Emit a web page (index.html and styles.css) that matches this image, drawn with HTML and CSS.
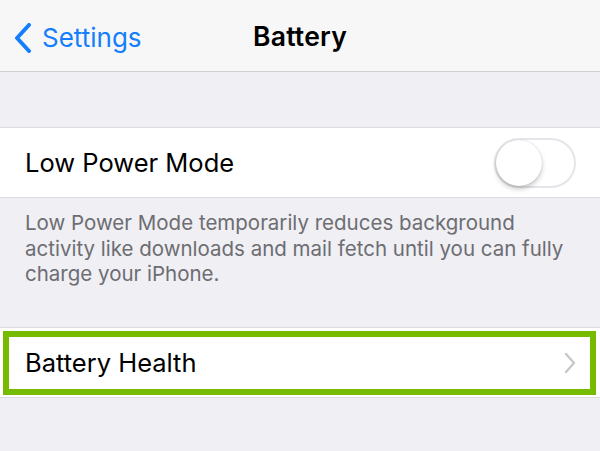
FILE: index.html
```html
<!DOCTYPE html>
<html lang="en">
<head>
    <meta charset="UTF-8">
    <meta name="viewport" content="width=device-width, initial-scale=1.0">
    <title>Battery</title>
    <link rel="stylesheet" href="styles.css">
</head>
<body>
    <div class="nav">
        <div class="back">
            <svg class="back-icon" width="20" height="30" viewBox="0 0 20 30">
                <path d="M16 2 L4 15 L16 28" fill="none" stroke="#147efb" stroke-width="4" stroke-linecap="round" stroke-linejoin="round"/>
            </svg>
            <span>Settings</span>
        </div>
        <h1 class="title">Battery</h1>
    </div>

    <div class="group">
        <div class="row">
            <span class="label">Low Power Mode</span>
            <div class="switch"><div class="knob"></div></div>
        </div>
    </div>
    <p class="footer">Low Power Mode temporarily reduces background activity like downloads and mail fetch until you can fully charge your iPhone.</p>

    <div class="group health">
        <div class="highlight">
            <div class="row">
                <span class="label">Battery Health</span>
                <svg class="chevron" width="14" height="22" viewBox="0 0 14 22">
                    <path d="M3 2 L11 11 L3 20" fill="none" stroke="#c7c7cc" stroke-width="2.4" stroke-linecap="round" stroke-linejoin="round"/>
                </svg>
            </div>
        </div>
    </div>
</body>
</html>
```

FILE: styles.css
```css
body {
margin: 0;
background-color: #efeff4;
font-family: Inter, "Noto Sans", sans-serif;
color: #000;
}


.nav {
position: relative;
height: 71px;
background-color: #f7f7f7;
border-bottom: 1px solid #cfcfd3;
display: flex;
align-items: center;
justify-content: center;
}


.back {
position: absolute;
left: 13px;
top: 22px;
display: flex;
align-items: center;
gap: 9px;
color: #147efb;
font-size: 26px;
}


.title {
margin: 0;
font-size: 26.5px;
font-weight: 600;
letter-spacing: 0.2px;
}


.group {
margin-top: 55px;
background: white;
border-top: 1px solid #dcdce0;
border-bottom: 1px solid #dcdce0;
}


.row {
height: 69px;
display: flex;
align-items: center;
justify-content: space-between;
padding: 0 24px 0 25px;
}


.label {
font-size: 25.5px;
}


.switch {
width: 78px;
height: 46px;
border: 2px solid #e5e5ea;
border-radius: 25px;
position: relative;
}


.knob {
position: absolute;
left: 0;
top: 0;
width: 46px;
height: 46px;
border-radius: 50%;
background: white;
box-shadow: 0 3px 5px rgba(0, 0, 0, 0.22), 0 0 1px rgba(0, 0, 0, 0.2);
}


.footer {
margin: 0;
padding: 12px 10px 0 25px;
font-size: 20.5px;
line-height: 25.5px;
color: #6d6d72;
}


.health {
margin-top: 40px;
padding: 3px 4px 2px 3px;
}


.highlight {
border: 6px solid #77bb00;
}


.highlight .row {
height: 52px;
padding: 0 13px 0 16px;
}
```
